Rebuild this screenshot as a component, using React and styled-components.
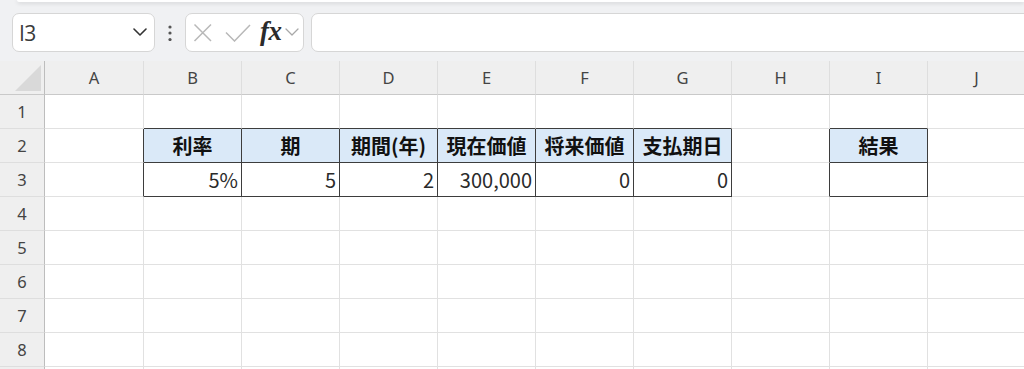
import React from 'react';
import styled, { createGlobalStyle } from 'styled-components';

const GlobalStyle = createGlobalStyle`
  html, body {
    margin: 0;
    padding: 0;
    background: #f0f1f3;
    overflow: hidden;
  }
  body {
    font-family: "Noto Sans", "Noto Sans CJK JP", sans-serif;
  }
`;

const Page = styled.div`
  width: 1024px;
  height: 369px;
  overflow: hidden;
  background: #f0f1f3;
`;

const RibbonEdge = styled.div`
  height: 2px;
  margin-left: 17px;
  background: #ffffff;
  border-radius: 0 0 0 8px;
  box-shadow: 0 1px 4px rgba(0, 0, 0, 0.18);
`;

const Toolbar = styled.div`
  height: 59px;
  display: flex;
  align-items: flex-start;
  padding-top: 11px;
  padding-left: 12px;
  box-sizing: border-box;
`;

const Box = styled.div`
  height: 39px;
  box-sizing: border-box;
  background: #ffffff;
  border: 1px solid #d6d6d6;
  border-radius: 7px;
  display: flex;
  align-items: center;
`;

const NameBox = styled(Box)`
  width: 143px;
  padding: 0 7px 0 6px;
  justify-content: space-between;
`;

const NameText = styled.span`
  font-family: "Open Sans", "Noto Sans", sans-serif;
  font-weight: 400;
  font-size: 21px;
  color: #3a3a3a;
  letter-spacing: -0.5px;
`;

const Grip = styled.div`
  width: 30px;
  height: 39px;
  display: flex;
  align-items: center;
  justify-content: center;
`;

const FxGroup = styled(Box)`
  width: 119px;
  padding-left: 7px;
`;

const FxText = styled.span`
  font-family: "Liberation Serif", "DejaVu Serif", serif;
  font-style: italic;
  font-weight: bold;
  font-size: 27px;
  line-height: 1;
  color: #2b2b2b;
  margin: -3px 3px 0 9px;
  letter-spacing: -0.5px;
`;

const FormulaInput = styled(Box)`
  flex: 1;
  margin-left: 7px;
  margin-right: -10px;
`;

const Sheet = styled.div`
  display: grid;
  grid-template-columns: 45px 99px repeat(9, 98px);
  grid-auto-rows: 34px;
  background: #ffffff;
`;

const ColHead = styled.div`
  background: #efefef;
  border-right: 1px solid ${(p) => (p.$corner ? '#bdbdbd' : '#dedede')};
  border-bottom: 1px solid #c9c9c9;
  display: flex;
  align-items: center;
  justify-content: center;
  font-family: "Noto Sans", sans-serif;
  font-size: 16.5px;
  color: #444;
  position: relative;
`;

const Corner = styled.div`
  position: absolute;
  left: 15px;
  top: 4px;
  width: 0;
  height: 0;
  border-left: 26px solid transparent;
  border-bottom: 26px solid #d9d9d9;
`;

const RowHead = styled.div`
  background: #efefef;
  border-right: 1px solid #bdbdbd;
  border-bottom: 1px solid #dedede;
  display: flex;
  align-items: center;
  justify-content: center;
  font-family: "Noto Sans", sans-serif;
  font-size: 16.5px;
  color: #444;
`;

const Cell = styled.div`
  box-sizing: border-box;
  background: ${(p) => (p.$head ? '#dae9f8' : '#ffffff')};
  border-right: 1px solid ${(p) => (p.$darkRight ? '#3d3d3d' : '#e1e1e1')};
  border-bottom: 1px solid ${(p) => (p.$darkBottom ? '#3d3d3d' : '#e1e1e1')};
  display: flex;
  align-items: center;
  justify-content: ${(p) => (p.$head ? 'center' : 'flex-end')};
  padding: 0 3px;
  font-family: "Noto Sans CJK JP", "Noto Sans", sans-serif;
  font-size: 20px;
  font-weight: ${(p) => (p.$head ? 700 : 400)};
  color: ${(p) => (p.$head ? '#111' : '#2a2a2a')};
  white-space: nowrap;
  overflow: hidden;
`;

const columns = ['A', 'B', 'C', 'D', 'E', 'F', 'G', 'H', 'I', 'J'];

const data = {
  2: { B: '利率', C: '期', D: '期間(年)', E: '現在価値', F: '将来価値', G: '支払期日', I: '結果' },
  3: { B: '5%', C: '5', D: '2', E: '300,000', F: '0', G: '0', I: '' },
};

const boxedCols = [1, 2, 3, 4, 5, 6, 8];
const boxedRows = [2, 3];
// the ninth row only peeks in at the bottom edge, its number stays below the fold
const visibleRows = 8;

const Chevron = ({ w = 12, color = '#333', sw = 1.6 }) => (
  <svg width={w + 2} height={w / 2 + 3} viewBox={`-1 -1 ${w + 2} ${w / 2 + 3}`}>
    <polyline points={`0,0 ${w / 2},${w / 2} ${w},0`} fill="none" stroke={color} strokeWidth={sw} strokeLinecap="round" strokeLinejoin="round" />
  </svg>
);

const App = () => {
  const rows = [1, 2, 3, 4, 5, 6, 7, 8, 9];
  return (
    <Page>
      <GlobalStyle />
      <RibbonEdge />
      <Toolbar>
        <NameBox>
          <NameText>I3</NameText>
          <Chevron />
        </NameBox>
        <Grip>
          <svg width="4" height="16" viewBox="0 0 4 16">
            <circle cx="2" cy="2" r="1.6" fill="#555" />
            <circle cx="2" cy="8" r="1.6" fill="#555" />
            <circle cx="2" cy="14.5" r="1.6" fill="#555" />
          </svg>
        </Grip>
        <FxGroup>
          <svg width="20" height="20" viewBox="0 0 20 20">
            <path d="M1.5 1.5 L18 18 M18 1.5 L1.5 18" stroke="#b8b8b8" strokeWidth="1.5" fill="none" />
          </svg>
          <svg width="26" height="18" viewBox="0 0 26 18" style={{ marginLeft: 12 }}>
            <polyline points="1,8.5 9.5,17 25,1" stroke="#b8b8b8" strokeWidth="1.5" fill="none" />
          </svg>
          <FxText>fx</FxText>
          <Chevron w={12} color="#a8a8a8" sw={1.3} />
        </FxGroup>
        <FormulaInput />
      </Toolbar>
      <Sheet>
        <ColHead $corner>
          <Corner />
        </ColHead>
        {columns.map((c) => (
          <ColHead key={c}>{c}</ColHead>
        ))}
        {rows.map((r) => (
          <React.Fragment key={r}>
            <RowHead>{r <= visibleRows ? r : null}</RowHead>
            {columns.map((c, ci) => {
              const rowBoxed = boxedRows.includes(r);
              const darkRight = rowBoxed && (boxedCols.includes(ci) || boxedCols.includes(ci + 1));
              const darkBottom = boxedCols.includes(ci) && (rowBoxed || boxedRows.includes(r + 1));
              const value = data[r] ? data[r][c] : undefined;
              return (
                <Cell
                  key={c}
                  $head={r === 2 && value !== undefined}
                  $darkRight={darkRight}
                  $darkBottom={darkBottom}
                >
                  {value}
                </Cell>
              );
            })}
          </React.Fragment>
        ))}
      </Sheet>
    </Page>
  );
};

export default App;
